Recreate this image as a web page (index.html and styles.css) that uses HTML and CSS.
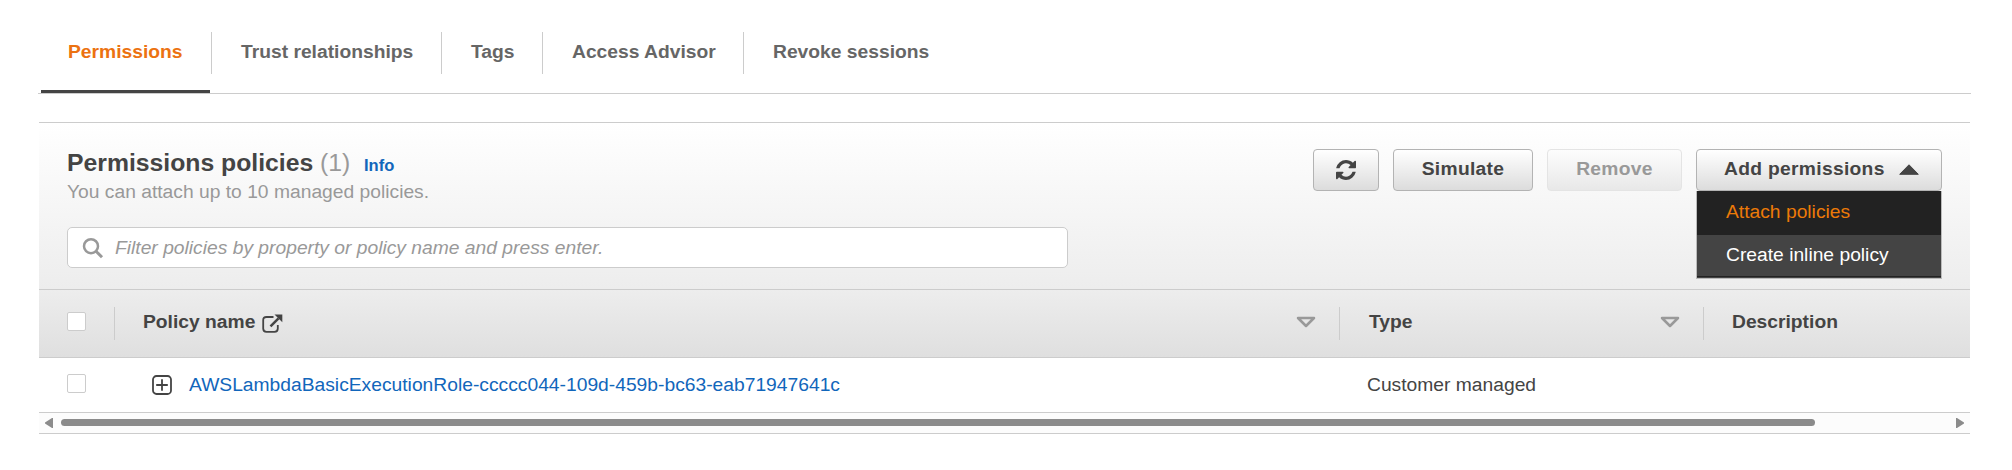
FILE: index.html
```html
<!DOCTYPE html>
<html lang="en">
<head>
<meta charset="utf-8">
<title>Permissions</title>
<link rel="stylesheet" href="styles.css">
</head>
<body>
<nav class="tabs">
  <div class="tab active"><a>Permissions</a></div>
  <div class="tab trust"><a>Trust relationships</a></div>
  <div class="tab tags"><a>Tags</a></div>
  <div class="tab advisor"><a>Access Advisor</a></div>
  <div class="tab revoke"><a>Revoke sessions</a></div>
</nav>
<main class="panel">
  <header class="toolbar">
    <div class="intro">
      <div class="heading"><h2>Permissions policies</h2><span class="count">(1)</span><a class="info">Info</a></div>
      <p class="hint">You can attach up to 10 managed policies.</p>
      <div class="search">
        <svg width="22" height="22" viewBox="0 0 22 22" fill="none" stroke="#999" stroke-width="2.500"><circle cx="9" cy="9.200" r="7"/><path d="M14 14.200l6 6" stroke-width="3"/></svg>
        <span class="placeholder">Filter policies by property or policy name and press enter.</span>
      </div>
    </div>
    <div class="actions">
      <button class="btn refresh"><svg width="20" height="20" viewBox="0 0 1536 1536"><path fill="#444" d="M1511 928q0 5-1 7-64 268-268 434.500T764 1536q-146 0-282.500-55T238 1324l-129 129q-19 19-45 19t-45-19-19-45V960q0-26 19-45t45-19h448q26 0 45 19t19 45-19 45l-137 137q71 66 161 102t187 36q134 0 250-65t186-179q11-17 53-117 8-23 30-23h192q13 0 22.500 9.500t9.500 22.500zm25-800v448q0 26-19 45t-45 19h-448q-26 0-45-19t-19-45 19-45l138-138Q969 256 768 256q-134 0-250 65T332 500q-11 17-53 117-8 23-30 23H50q-13 0-22.500-9.500T18 608v-7q65-268 270-434.500T768 0q146 0 284 55.500T1297 212l130-129q19-19 45-19t45 19 19 45z"/></svg></button>
      <button class="btn simulate">Simulate</button>
      <button class="btn remove" disabled>Remove</button>
      <div class="dropdown">
        <button class="btn add"><span>Add permissions</span><svg width="20" height="11" viewBox="0 0 20 11"><path fill="#444" stroke="#444" stroke-linejoin="round" d="M10 .8L19.300 10.300H.7z"/></svg></button>
        <div class="menu"><a class="item selected">Attach policies</a><a class="item">Create inline policy</a></div>
      </div>
    </div>
  </header>
  <div class="grid head">
    <div class="cell check"><i class="box"></i></div>
    <div class="cell name"><span>Policy name</span><svg width="21" height="19" viewBox="0 0 21 19" fill="none" stroke="#444" stroke-width="1.800"><path d="M11.500 3H4.500Q1.200 3 1.200 6V14.500Q1.200 17.800 4.500 17.800H12.500Q15.800 17.800 15.800 14.500V11"/><path d="M8.500 12.300L16.500 4.300" stroke-width="2.500"/><path d="M12.500 .6H20.300V8.200z" fill="#444" stroke="none"/></svg><svg class="sort" width="20" height="12" viewBox="0 0 20 12"><path d="M2 2H18L10 10z"/></svg></div>
    <div class="cell type"><span>Type</span><svg class="sort" width="20" height="12" viewBox="0 0 20 12"><path d="M2 2H18L10 10z"/></svg></div>
    <div class="cell desc"><span>Description</span></div>
  </div>
  <div class="grid row">
    <div class="cell check"><i class="box"></i></div>
    <div class="cell name"><svg width="20" height="20" viewBox="0 0 20 20" fill="none" stroke="#444" stroke-width="1.800"><rect x="1" y="1" width="18" height="18" rx="3.500"/><path d="M10 4.200V15.800M4.200 10H15.800"/></svg><a>AWSLambdaBasicExecutionRole-ccccc044-109d-459b-bc63-eab71947641c</a></div>
    <div class="cell type"><span>Customer managed</span></div>
    <div class="cell desc"></div>
  </div>
  <div class="scrollbar">
    <svg width="8" height="10" viewBox="0 0 8 10"><path fill="#8b8b8b" d="M8 0V10H7L0 5.500V4.500L7 0z"/></svg>
    <div class="track"><div class="thumb"></div></div>
    <svg width="8" height="10" viewBox="0 0 8 10"><path fill="#8b8b8b" d="M0 0V10H1L8 5.500V4.500L1 0z"/></svg>
  </div>
</main>
</body>
</html>
```
FILE: styles.css
```css
* { box-sizing: border-box; }
body {
  margin: 0;
  padding-top: 32px;
  background: #fff;
  color: #444;
  font: 19.25px/24px "Liberation Sans", Arial, sans-serif;
}
svg { display: block; flex: none; }

.tabs {
  display: flex;
  margin: 0 41px 0 38px;
  height: 62px;
  padding-left: 3px;
  border-bottom: 1px solid #ccc;
}
.tab {
  height: 42px;
  padding: 8px 0 0 29px;
  border-right: 1px solid #ccc;
  color: #666;
  font-weight: bold;
  white-space: nowrap;
}
.tab.active { width: 171px; padding-left: 27px; color: #ec7211; position: relative; }
.tab.active::after {
  content: "";
  position: absolute;
  left: 0;
  top: 58px;
  width: 169px;
  height: 3px;
  background: #444;
}
.tab.trust { width: 230px; }
.tab.tags { width: 101px; }
.tab.advisor { width: 201px; }
.tab.revoke { border-right: 0; }

.panel { margin: 28px 42px 0 39px; }
.toolbar {
  display: flex;
  justify-content: space-between;
  height: 167px;
  padding: 26px 28px 0;
  border-top: 1px solid #ccc;
  background: linear-gradient(#fff, #ededed);
}
.heading { display: flex; align-items: baseline; height: 28px; line-height: 27px; }
.heading h2 { margin: 0; width: 253px; font-size: 24.75px; white-space: nowrap; }
.count { width: 44px; font-size: 24.75px; color: #999; }
.info { font-size: 16.5px; font-weight: bold; color: #1166bb; }
.hint { margin: 3px 0 0; color: #999; }
.search {
  display: flex;
  align-items: center;
  width: 1001px;
  height: 41px;
  margin-top: 23px;
  padding-left: 14px;
  border: 1px solid #ccc;
  border-radius: 5px;
  background: #fff;
}
.placeholder { margin-left: 11px; color: #999; font-style: italic; }

.actions { display: flex; gap: 14px; }
.btn {
  display: flex;
  align-items: center;
  justify-content: center;
  height: 42px;
  padding: 0 0 2px;
  border: 1px solid #b3b3b3;
  border-radius: 4px;
  background: linear-gradient(#fff, #dcdcdc);
  color: #444;
  font: bold 19.25px/24px "Liberation Sans", Arial, sans-serif;
  letter-spacing: .3px;
  white-space: nowrap;
}
.refresh { width: 66px; padding: 0; }
.simulate { width: 140px; }
.remove { width: 135px; border-color: #e4e4e4; background: linear-gradient(#fdfdfd, #e8e8e8); color: #999; }
.dropdown { position: relative; }
.add { width: 246px; justify-content: space-between; padding: 0 22px 2px 27px; }
.menu {
  position: absolute;
  top: 42px;
  left: 0;
  width: 246px;
  height: 88px;
  border: 1px solid #bbb;
  border-top: 0;
  background: #444;
}
.item { display: block; height: 41px; padding: 8px 0 0 29px; color: #fff; }
.item.selected { height: 44px; padding-top: 9px; background: #222; color: #ec7a08; }
.menu::after { content: ""; display: block; height: 1px; background: #222; }

.grid { display: grid; grid-template-columns: 76px 1225px 364px 266px; border-bottom: 1px solid #ccc; }
.cell { display: flex; align-items: center; }
.head { height: 69px; border-top: 1px solid #ccc; background: linear-gradient(#ededed, #dfdfdf); font-weight: bold; }
.head .cell { height: 33px; margin-top: 17px; border-right: 1px solid #ccc; padding: 0 0 3px 28px; }
.head .desc { border-right: 0; }
.head .type { padding-left: 29px; }
.head .check { padding-bottom: 4px; }
.head .name svg:not(.sort) { margin: 2px 0 0 7px; }
.head .sort { margin: 0 23px 0 auto; fill: none; stroke: #999; stroke-width: 2.500; stroke-linejoin: round; }
.box { width: 19px; height: 19px; border: 1px solid #ccc; border-radius: 2px; background: #fff; }
.row { height: 55px; }
.row .check { padding-left: 28px; padding-bottom: 3px; }
.row .name { padding-left: 37px; }
.row .name a { margin-left: 17px; color: #1166bb; }
.row .type { padding-left: 27px; }

.scrollbar {
  display: flex;
  align-items: center;
  height: 21px;
  padding: 0 6px 1px;
  border-bottom: 1px solid #ccc;
  background: #fcfcfc;
}
.scrollbar svg { margin-top: 1px; }
.track { flex: 1; padding: 0 8px; }
.thumb { width: 1754px; height: 7px; border-radius: 4px; background: #8b8b8b; }
```
